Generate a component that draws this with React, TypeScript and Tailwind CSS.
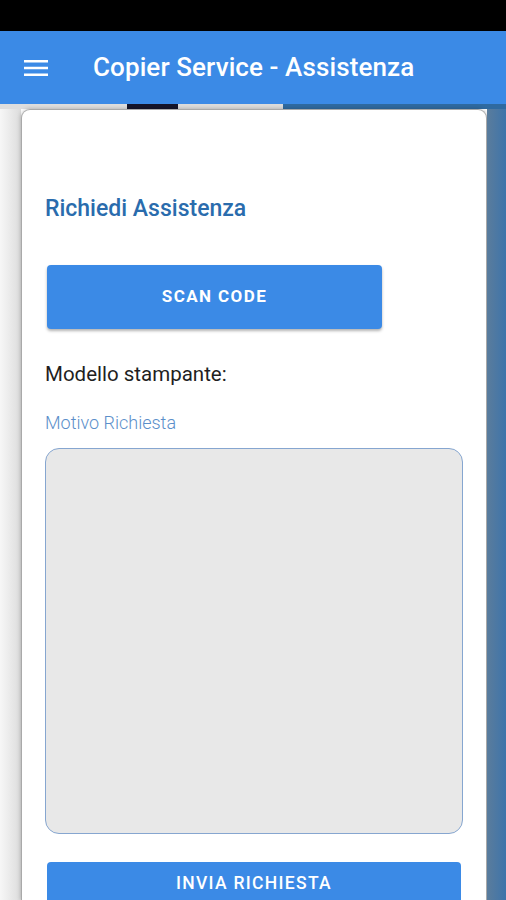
import { useState } from "react";

function MenuIcon() {
  return (
    <svg width="24" height="18" viewBox="0 0 24 18" className="block">
      <rect x="0" y="1" width="24" height="2.5" fill="white" />
      <rect x="0" y="7.75" width="24" height="2.5" fill="white" />
      <rect x="0" y="14.5" width="24" height="2.5" fill="white" />
    </svg>
  );
}

export default function App() {
  const [motivo, setMotivo] = useState("");

  return (
    <div
      className="w-[506px] h-[900px] overflow-hidden flex flex-col bg-white"
      style={{ fontFamily: "Roboto, 'Noto Sans', sans-serif" }}
    >
      {/* Status bar */}
      <div className="h-[31px] bg-black shrink-0" />

      {/* App bar */}
      <div className="h-[73px] bg-[#3b8ae6] shrink-0 flex items-center pl-[24px]">
        <MenuIcon />
        <h1 className="ml-[45px] text-[26px] font-medium text-white tracking-[0.1px]">
          Copier Service - Assistenza
        </h1>
      </div>

      {/* Tab strip */}
      <div className="h-[5px] shrink-0 flex">
        <div className="w-[127px] bg-[#dedede]" />
        <div className="w-[51px] bg-[#15152a]" />
        <div className="w-[105px] bg-[#dcdcdc]" />
        <div className="flex-1 bg-[#2f6aa0]" />
      </div>

      {/* Content */}
      <div className="flex-1 flex min-h-0">
        <div className="w-[21px] shrink-0 bg-gradient-to-r from-[#f7f7f7] to-[#dcdcdc]" />

        <div className="flex-1 bg-white rounded-t-[9px] border-x border-t border-[#a9a9a9] shadow-[0_0_4px_rgba(0,0,0,0.25)] px-[23px] pt-[85px] flex flex-col">
          <h2 className="text-[23px] leading-[28px] font-medium text-[#2a6cad]">
            Richiedi Assistenza
          </h2>

          <button className="mt-[42px] ml-[2px] w-[335px] h-[64px] shrink-0 bg-[#3b8ae6] rounded-[4px] shadow-[0_2px_3px_rgba(0,0,0,0.3)] text-white text-[17px] font-bold tracking-[1.4px]">
            SCAN CODE
          </button>

          <p className="mt-[32px] text-[20.5px] leading-[26px] text-[#1f1f1f]">
            Modello stampante:
          </p>

          <label className="mt-[25px] text-[18px] leading-[22px] text-[#5b8fca] font-light">
            Motivo Richiesta
          </label>

          <textarea
            value={motivo}
            onChange={(e) => setMotivo(e.target.value)}
            className="mt-[14px] h-[386px] shrink-0 w-full resize-none bg-[#e8e8e8] border-[1.5px] border-[#86a6d0] rounded-[14px] outline-none p-3"
          />

          <button className="mt-[28px] ml-[2px] w-[414px] h-[48px] shrink-0 bg-[#3b8ae6] rounded-[4px] text-white text-[17.5px] font-medium tracking-[1.3px] pb-[5px]">
            INVIA RICHIESTA
          </button>
        </div>

        <div className="w-[19px] shrink-0 bg-gradient-to-r from-[#5a7c9c] to-[#3d74aa]" />
      </div>
    </div>
  );
}
